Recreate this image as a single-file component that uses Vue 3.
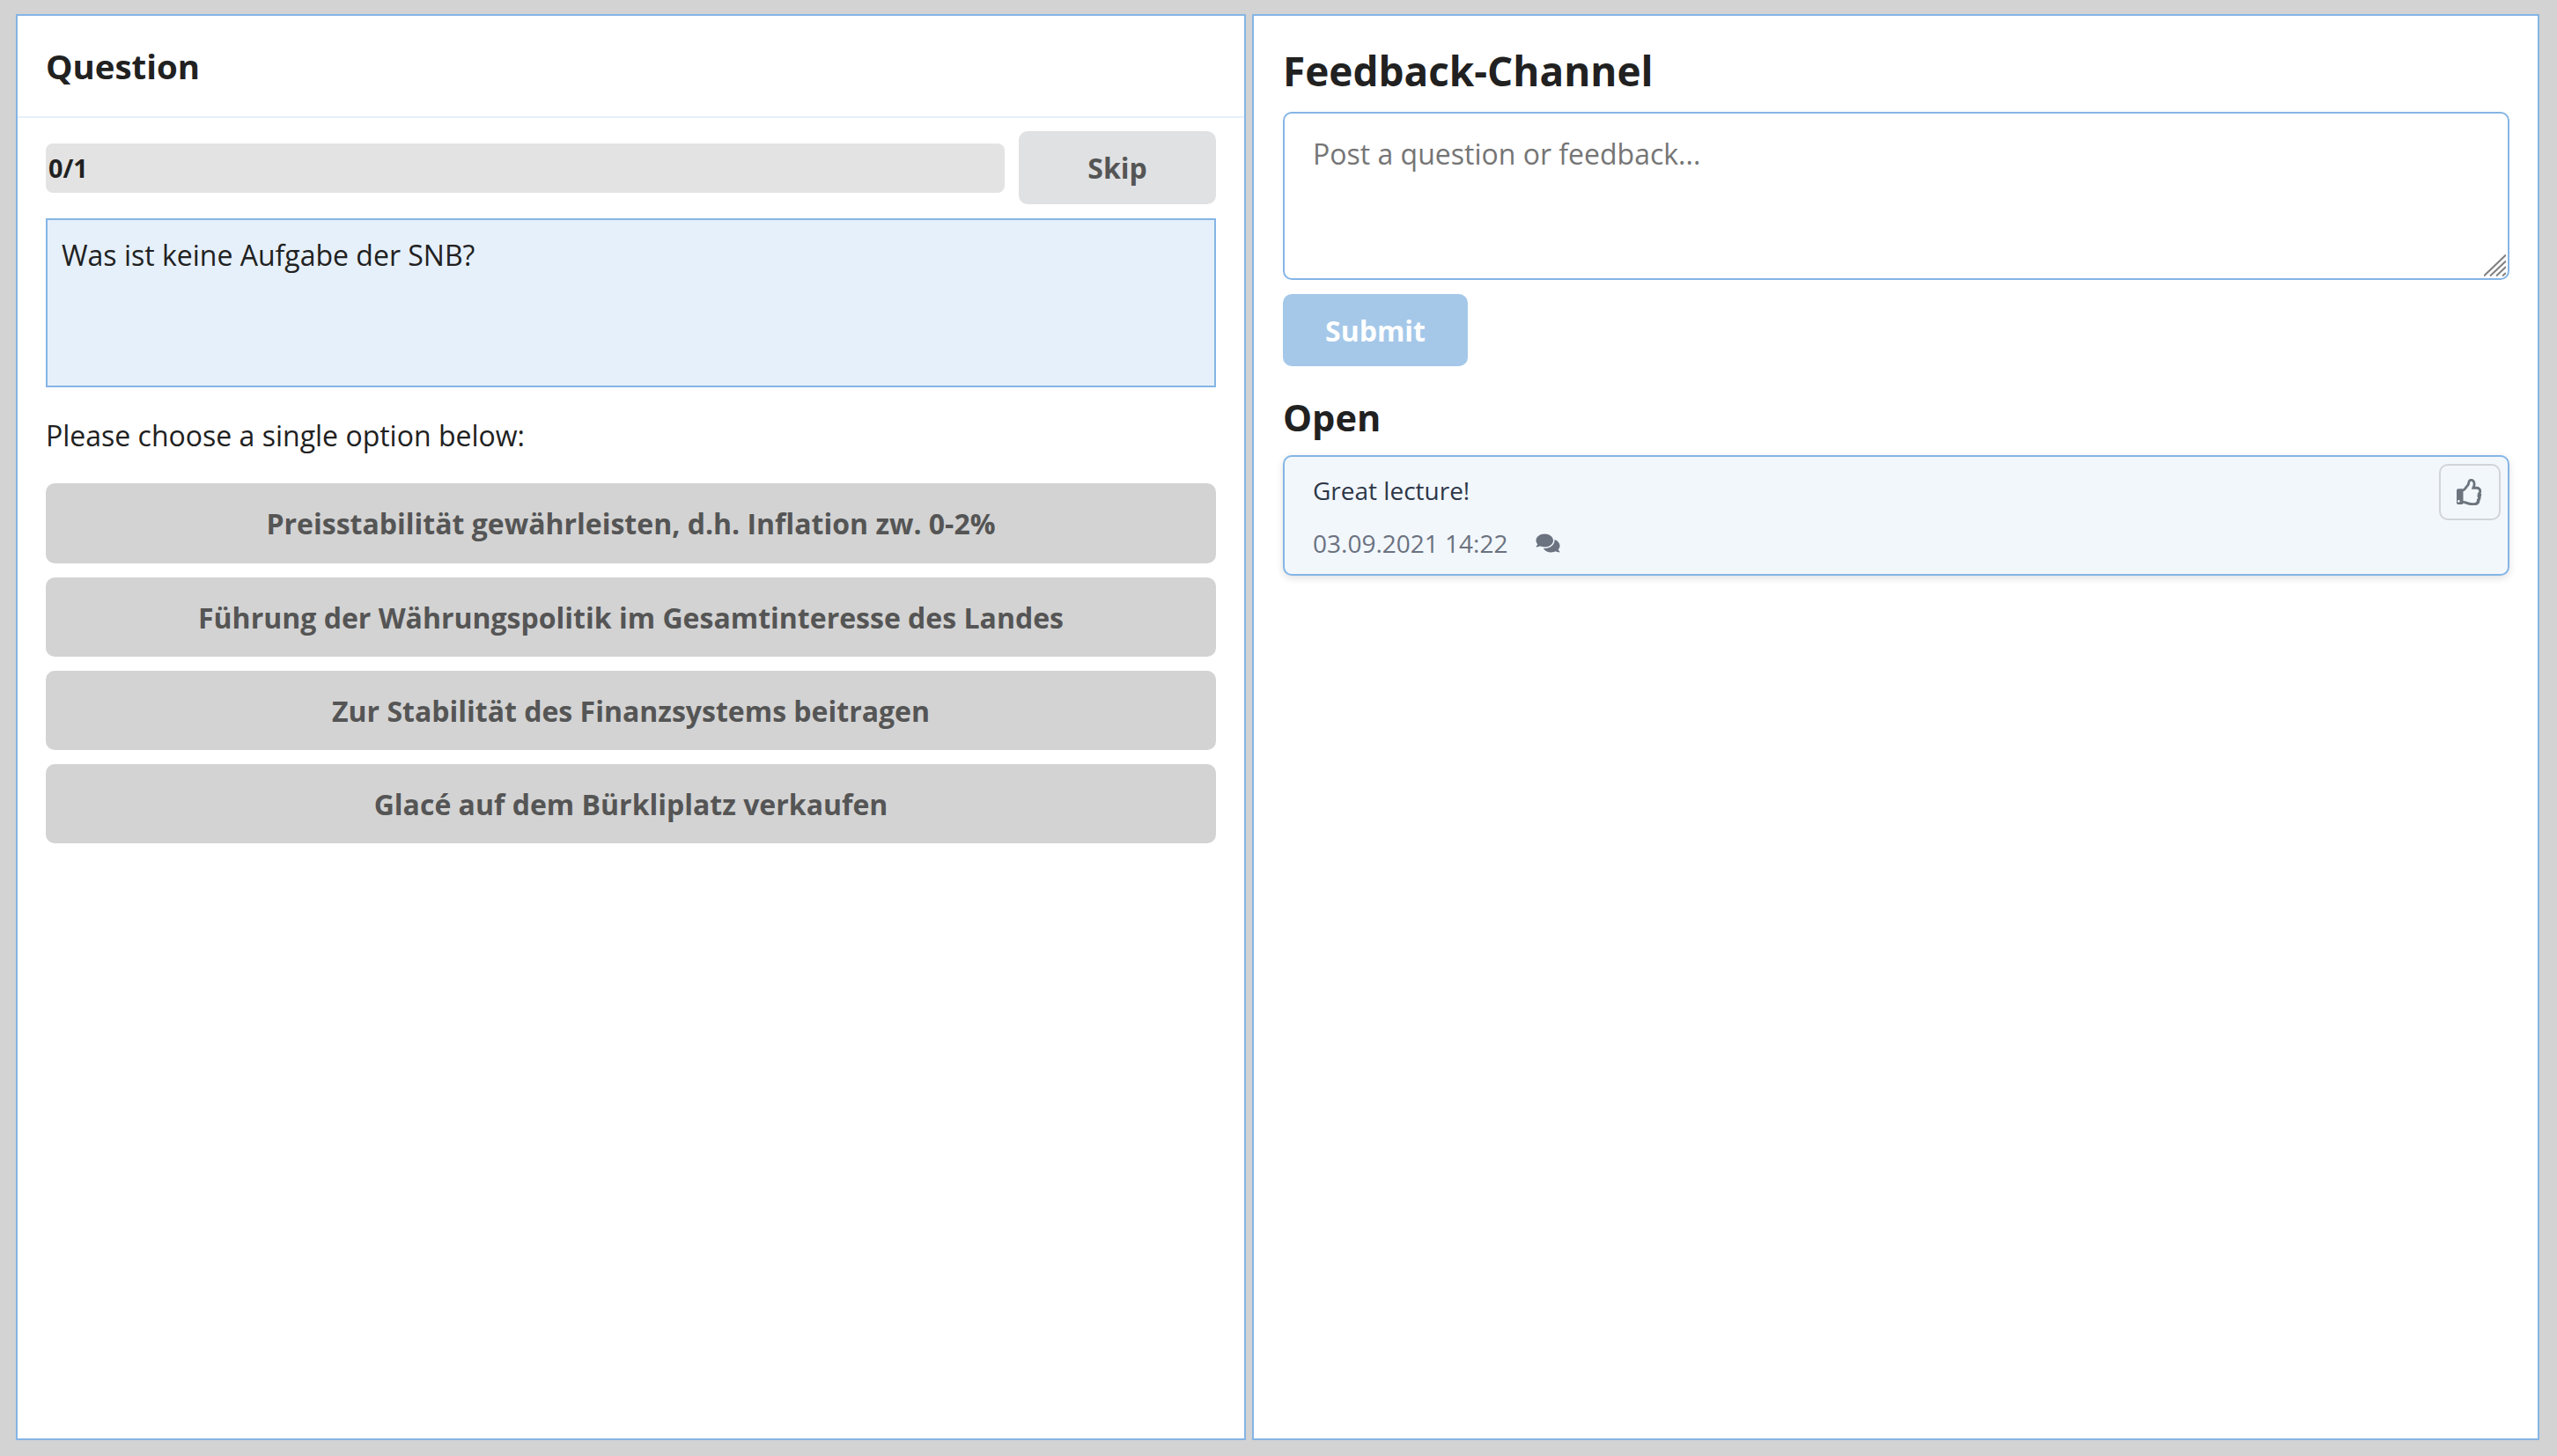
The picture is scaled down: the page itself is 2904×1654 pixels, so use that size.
<template>
  <div class="page">
    <section class="panel panel-left">
      <header class="panel-header">
        <h2 class="question-title">Question</h2>
      </header>
      <div class="panel-body">
        <div class="progress-row">
          <div class="progress"><span class="progress-label">0/1</span></div>
          <button class="skip-btn">Skip</button>
        </div>
        <div class="question-box">Was ist keine Aufgabe der SNB?</div>
        <p class="hint">Please choose a single option below:</p>
        <div class="options">
          <button v-for="option in options" :key="option" class="option-btn">{{ option }}</button>
        </div>
      </div>
    </section>

    <section class="panel panel-right">
      <h1 class="feedback-title">Feedback-Channel</h1>
      <div class="input-wrap">
        <textarea class="feedback-input" placeholder="Post a question or feedback..."></textarea>
        <!-- resize grip -->
        <svg class="grip" viewBox="0 0 25 25" stroke="#808080" stroke-width="2">
          <path d="M0 24.5 25 .5M7 24.5 25 7.5M14 24.5 25 14M21 24.5 25 21" />
        </svg>
      </div>
      <button class="submit-btn">Submit</button>
      <h2 class="open-title">Open</h2>
      <div class="feedback-card">
        <div class="card-text">
          <p class="card-message">Great lecture!</p>
          <div class="card-meta">
            <span>03.09.2021 14:22</span>
            <svg class="comments-icon" viewBox="0 0 576 512" fill="currentColor">
              <path d="M416 192c0-88.4-93.1-160-208-160S0 103.6 0 192c0 34.3 14.1 65.9 38 92-13.4 30.2-35.5 54.2-35.8 54.5-2.2 2.3-2.8 5.7-1.5 8.7S4.8 352 8 352c36.6 0 66.9-12.3 88.7-25 32.2 15.7 70.3 25 111.3 25 114.9 0 208-71.6 208-160zm122 220c23.9-26 38-57.7 38-92 0-66.9-53.5-124.2-129.3-148.1.9 6.6 1.3 13.3 1.3 20.1 0 105.9-107.7 192-240 192-10.8 0-21.3-.8-31.7-1.9C207.8 439.6 281.8 480 368 480c41 0 79.1-9.2 111.3-25 21.8 12.7 52.1 25 88.7 25 3.2 0 6.1-1.9 7.3-4.8 1.3-2.9.7-6.3-1.5-8.7-.3-.3-22.4-24.2-35.8-54.5z" />
            </svg>
          </div>
        </div>
        <button class="like-btn">
          <svg class="like-icon" viewBox="0 0 512 512" fill="currentColor" fill-rule="evenodd">
            <path d="M466.27 286.69C475.04 271.84 480 256 480 236.85c0-44.015-37.218-85.58-85.82-85.58H357.7c4.92-12.81 8.85-28.13 8.85-46.54C366.55 31.936 328.86 0 271.28 0c-61.607 0-58.093 94.933-71.76 108.6-22.747 22.747-49.615 66.447-68.76 83.4H32c-17.673 0-32 14.327-32 32v240c0 17.673 14.327 32 32 32h64c14.893 0 27.408-10.174 30.978-23.95 44.509 1.001 75.06 39.94 177.802 39.94h34.6c77.117 0 111.986-39.423 112.94-95.33 13.319-18.425 20.299-43.122 17.34-66.99 9.854-18.452 13.664-40.343 8.99-62.99zm-61.75 53.83c12.56 21.13 1.26 49.41-13.94 57.57 7.7 48.78-17.608 65.9-53.12 65.9h-37.82c-71.639 0-118.029-37.82-171.64-37.82V240h10.92c28.36 0 67.98-70.89 94.54-97.46 28.36-28.36 18.91-75.63 37.82-94.54 47.27 0 47.27 32.98 47.27 56.73 0 39.17-28.36 56.72-28.36 94.54h103.99c21.11 0 37.73 18.91 37.82 37.82.09 18.9-12.82 37.81-31.73 37.81 17.19 18.89 5.6 46.4-10.74 65.6zM64 432c0 13.255-10.745 24-24 24s-24-10.745-24-24 10.745-24 24-24 24 10.745 24 24z" />
          </svg>
        </button>
      </div>
    </section>
  </div>
</template>

<script setup>
const options = [
  'Preisstabilität gewährleisten, d.h. Inflation zw. 0-2%',
  'Führung der Währungspolitik im Gesamtinteresse des Landes',
  'Zur Stabilität des Finanzsystems beitragen',
  'Glacé auf dem Bürkliplatz verkaufen',
]
</script>

<style>
html, body {
  margin: 0;
  background: #d3d3d3;
}
</style>

<style scoped>
.page {
  box-sizing: border-box;
  height: 1654px;
  padding: 16px 20px 18px 18px;
  display: grid;
  grid-template-columns: 1397px 1462px;
  gap: 7px;
  font-family: "Open Sans", sans-serif;
  color: #212121;
}

.panel {
  box-sizing: border-box;
  background: #fff;
  border: 2px solid #85b5e5;
  min-height: 0;
}

/* Left panel */
.panel-header {
  height: 114px;
  padding: 0 32px;
  display: flex;
  align-items: center;
  border-bottom: 2px solid #e6f0fa;
}

.question-title {
  margin: 0;
  font-size: 38.4px;
  font-weight: 700;
}

.panel-body {
  padding: 15px 32px 0;
}

.progress-row {
  display: flex;
  align-items: center;
  gap: 16px;
}

.progress {
  flex: 1;
  height: 56px;
  background: #e3e3e3;
  border-radius: 8px;
  display: flex;
  align-items: center;
  padding-left: 3px;
}

.progress-label {
  font-size: 28.8px;
  font-weight: 700;
}

.skip-btn {
  width: 224px;
  height: 83px;
  border: none;
  border-radius: 10px;
  background: #e0e1e3;
  color: #555;
  font: 700 32px "Open Sans", sans-serif;
}

.question-box {
  box-sizing: border-box;
  margin-top: 16px;
  height: 192px;
  padding: 18px 16px;
  background: #e6f0fa;
  border: 2px solid #85b5e5;
  font-size: 32px;
  line-height: 44px;
}

.hint {
  margin: 33px 0 0;
  font-size: 32px;
  line-height: 44px;
}

.options {
  margin-top: 32px;
  display: flex;
  flex-direction: column;
  gap: 16px;
}

.option-btn {
  height: 90px;
  border: none;
  border-radius: 10px;
  background: #d3d3d3;
  color: #555;
  font: 700 32px "Open Sans", sans-serif;
}

.option-btn:first-child {
  height: 91px;
}

/* Right panel */
.panel-right {
  padding: 0 32px 0 33px;
}

.feedback-title {
  margin: 30px 0 0;
  font-size: 45.9px;
  line-height: 64px;
  font-weight: 700;
}

.input-wrap {
  position: relative;
  margin-top: 15px;
}

.feedback-input {
  display: block;
  box-sizing: border-box;
  width: 100%;
  height: 191px;
  padding: 24px 32px;
  border: 2px solid #85b5e5;
  border-radius: 10px;
  outline: none;
  font: 32px/44px "Open Sans", sans-serif;
  resize: none;
}

.grip {
  position: absolute;
  right: 4px;
  bottom: 4px;
  width: 25px;
  height: 25px;
  pointer-events: none;
}

.submit-btn {
  display: block;
  width: 210px;
  height: 82px;
  margin-top: 16px;
  border: none;
  border-radius: 10px;
  background: #a5c8e9;
  color: #fff;
  font: 700 32px "Open Sans", sans-serif;
}

.open-title {
  margin: 34px 0 0;
  font-size: 41.6px;
  line-height: 48px;
  font-weight: 700;
}

.feedback-card {
  box-sizing: border-box;
  margin-top: 19px;
  height: 137px;
  padding: 8px 8px 0 32px;
  display: flex;
  justify-content: space-between;
  background: #f2f7fc;
  border: 2px solid #85b5e5;
  border-radius: 10px;
  box-shadow: 0 3px 8px rgba(0, 0, 0, 0.12);
}

.card-text {
  padding-top: 10px;
}

.card-message {
  margin: 0;
  font-size: 28px;
  line-height: 40px;
  color: #2d3748;
}

.card-meta {
  margin-top: 20px;
  display: flex;
  align-items: center;
  gap: 32px;
  font-size: 28px;
  line-height: 40px;
  color: #6b7280;
}

.comments-icon {
  width: 28px;
  height: 24px;
}

.like-btn {
  width: 70px;
  height: 64px;
  padding: 0;
  display: flex;
  align-items: center;
  justify-content: center;
  background: transparent;
  border: 2px solid #d1d5db;
  border-radius: 10px;
  color: #6c757d;
}

.like-icon {
  width: 30px;
  height: 30px;
}
</style>
